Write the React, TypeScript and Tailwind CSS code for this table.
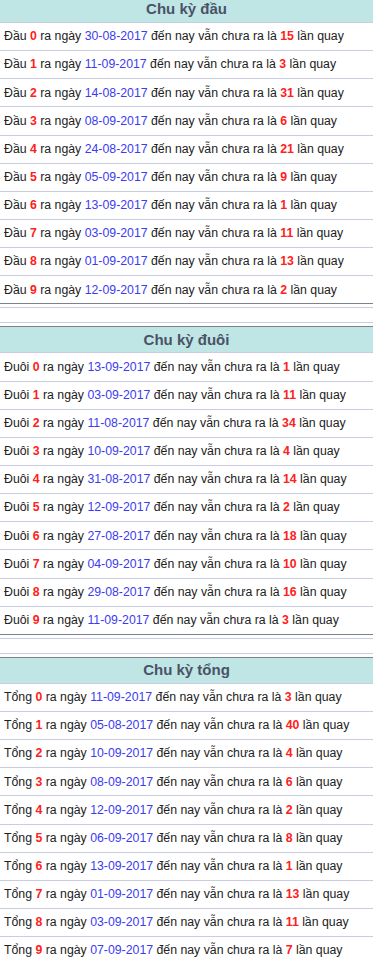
const dau = [
  ["0", "30-08-2017", "15"],
  ["1", "11-09-2017", "3"],
  ["2", "14-08-2017", "31"],
  ["3", "08-09-2017", "6"],
  ["4", "24-08-2017", "21"],
  ["5", "05-09-2017", "9"],
  ["6", "13-09-2017", "1"],
  ["7", "03-09-2017", "11"],
  ["8", "01-09-2017", "13"],
  ["9", "12-09-2017", "2"],
];

const duoi = [
  ["0", "13-09-2017", "1"],
  ["1", "03-09-2017", "11"],
  ["2", "11-08-2017", "34"],
  ["3", "10-09-2017", "4"],
  ["4", "31-08-2017", "14"],
  ["5", "12-09-2017", "2"],
  ["6", "27-08-2017", "18"],
  ["7", "04-09-2017", "10"],
  ["8", "29-08-2017", "16"],
  ["9", "11-09-2017", "3"],
];

const tong = [
  ["0", "11-09-2017", "3"],
  ["1", "05-08-2017", "40"],
  ["2", "10-09-2017", "4"],
  ["3", "08-09-2017", "6"],
  ["4", "12-09-2017", "2"],
  ["5", "06-09-2017", "8"],
  ["6", "13-09-2017", "1"],
  ["7", "01-09-2017", "13"],
  ["8", "03-09-2017", "11"],
  ["9", "07-09-2017", "7"],
];

function Section({ title, label, rows }: { title: string; label: string; rows: string[][] }) {
  return (
    <div className="border-t border-b border-[#7d828c]">
      <div className="h-[25px] bg-[#bfe6e4] flex items-center justify-center text-[15px] font-bold text-[#4a5266]">
        {title}
      </div>
      {rows.map(([n, date, count]) => (
        <div
          key={n}
          className="h-[28.15px] flex items-center px-[4px] text-[12.3px] text-[#222] border-t border-[#c8cde2] first:border-t-0 whitespace-nowrap"
        >
          {label}&nbsp;<span className="font-bold text-[#ff2020]">{n}</span>&nbsp;ra ngày&nbsp;
          <span className="text-[#3b3bf0]">{date}</span>&nbsp;đến nay vẫn chưa ra là&nbsp;
          <span className="font-bold text-[#ff2020]">{count}</span>&nbsp;lần quay
        </div>
      ))}
    </div>
  );
}

function Spacer() {
  return (
    <div className="py-[3px]">
      <div className="h-[16px] border-t border-b border-[#c8cde2]" />
    </div>
  );
}

export default function App() {
  return (
    <div className="w-[373px] bg-white -mt-[4px] font-['Liberation_Sans',Arial,sans-serif]">
      <Section title="Chu kỳ đầu" label="Đầu" rows={dau} />
      <Spacer />
      <Section title="Chu kỳ đuôi" label="Đuôi" rows={duoi} />
      <Spacer />
      <Section title="Chu kỳ tổng" label="Tổng" rows={tong} />
    </div>
  );
}
